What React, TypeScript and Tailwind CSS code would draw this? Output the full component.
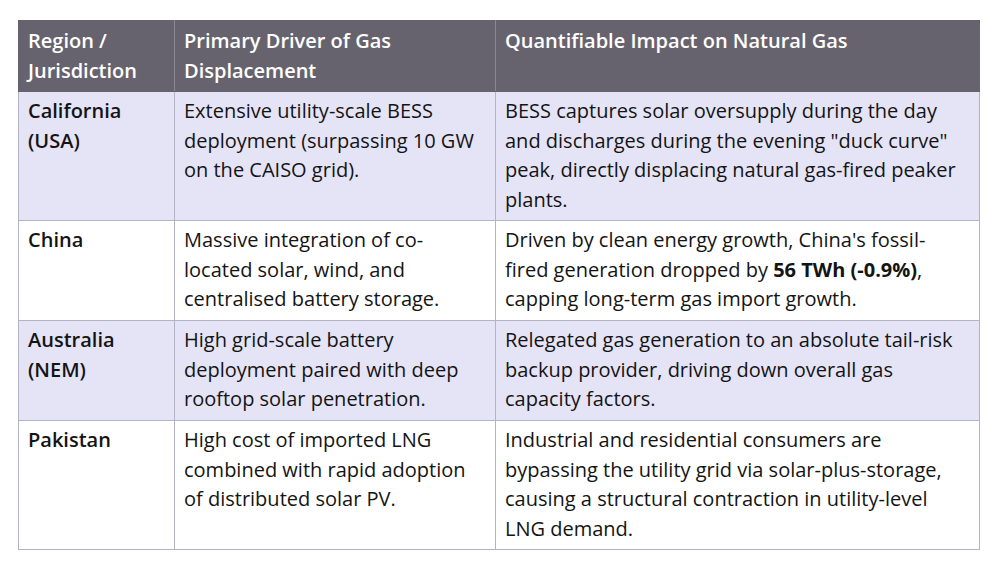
import React from 'react';

type Row = {
  region: string[];
  driver: string[];
  impact: React.ReactNode[];
  shaded: boolean;
  height: string;
};

const rows: Row[] = [
  {
    region: ['California', '(USA)'],
    driver: ['Extensive utility-scale BESS', 'deployment (surpassing 10 GW', 'on the CAISO grid).'],
    impact: [
      'BESS captures solar oversupply during the day',
      'and discharges during the evening "duck curve"',
      'peak, directly displacing natural gas-fired peaker',
      'plants.',
    ],
    shaded: true,
    height: 'h-[129px]',
  },
  {
    region: ['China'],
    driver: ['Massive integration of co-', 'located solar, wind, and', 'centralised battery storage.'],
    impact: [
      "Driven by clean energy growth, China's fossil-",
      <>
        fired generation dropped by <b className="font-bold">56 TWh (-0.9%)</b>,
      </>,
      'capping long-term gas import growth.',
    ],
    shaded: false,
    height: 'h-[100px]',
  },
  {
    region: ['Australia', '(NEM)'],
    driver: ['High grid-scale battery', 'deployment paired with deep', 'rooftop solar penetration.'],
    impact: [
      'Relegated gas generation to an absolute tail-risk',
      'backup provider, driving down overall gas',
      'capacity factors.',
    ],
    shaded: true,
    height: 'h-[100px]',
  },
  {
    region: ['Pakistan'],
    driver: ['High cost of imported LNG', 'combined with rapid adoption', 'of distributed solar PV.'],
    impact: [
      'Industrial and residential consumers are',
      'bypassing the utility grid via solar-plus-storage,',
      'causing a structural contraction in utility-level',
      'LNG demand.',
    ],
    shaded: false,
    height: 'h-[129px]',
  },
];

const Lines: React.FC<{ lines: React.ReactNode[] }> = ({ lines }) => (
  <div>
    {lines.map((l, i) => (
      <div key={i} className="whitespace-nowrap">
        {l}
      </div>
    ))}
  </div>
);

const cell = 'border border-[#b4b2c6] align-top px-[9px] pt-[4px]';

export default function App() {
  return (
    <div className="w-[1000px] h-[572px] bg-white pt-[20px] pl-[18px] font-['Open_Sans',sans-serif] text-[20px] leading-[29.7px] text-[#141414]">
      <table className="w-[961px] border-collapse table-fixed">
        <colgroup>
          <col className="w-[156px]" />
          <col className="w-[321px]" />
          <col className="w-[484px]" />
        </colgroup>
        <thead>
          <tr className="h-[71px] bg-[#67636e] text-white">
            <th className="border border-[#67636e] border-r-[#8a8794] align-top text-left px-[9px] pt-[5px] font-semibold">
              <Lines lines={['Region /', 'Jurisdiction']} />
            </th>
            <th className="border border-[#67636e] border-r-[#8a8794] align-top text-left px-[9px] pt-[5px] font-semibold">
              <Lines lines={['Primary Driver of Gas', 'Displacement']} />
            </th>
            <th className="border border-[#67636e] align-top text-left px-[9px] pt-[5px] font-semibold">
              <Lines lines={['Quantifiable Impact on Natural Gas']} />
            </th>
          </tr>
        </thead>
        <tbody>
          {rows.map((r) => (
            <tr key={r.region[0]} className={`${r.height} ${r.shaded ? 'bg-[#e5e3f6]' : 'bg-white'}`}>
              <td className={`${cell} font-semibold`}>
                <Lines lines={r.region} />
              </td>
              <td className={cell}>
                <Lines lines={r.driver} />
              </td>
              <td className={cell}>
                <Lines lines={r.impact} />
              </td>
            </tr>
          ))}
        </tbody>
      </table>
    </div>
  );
}
